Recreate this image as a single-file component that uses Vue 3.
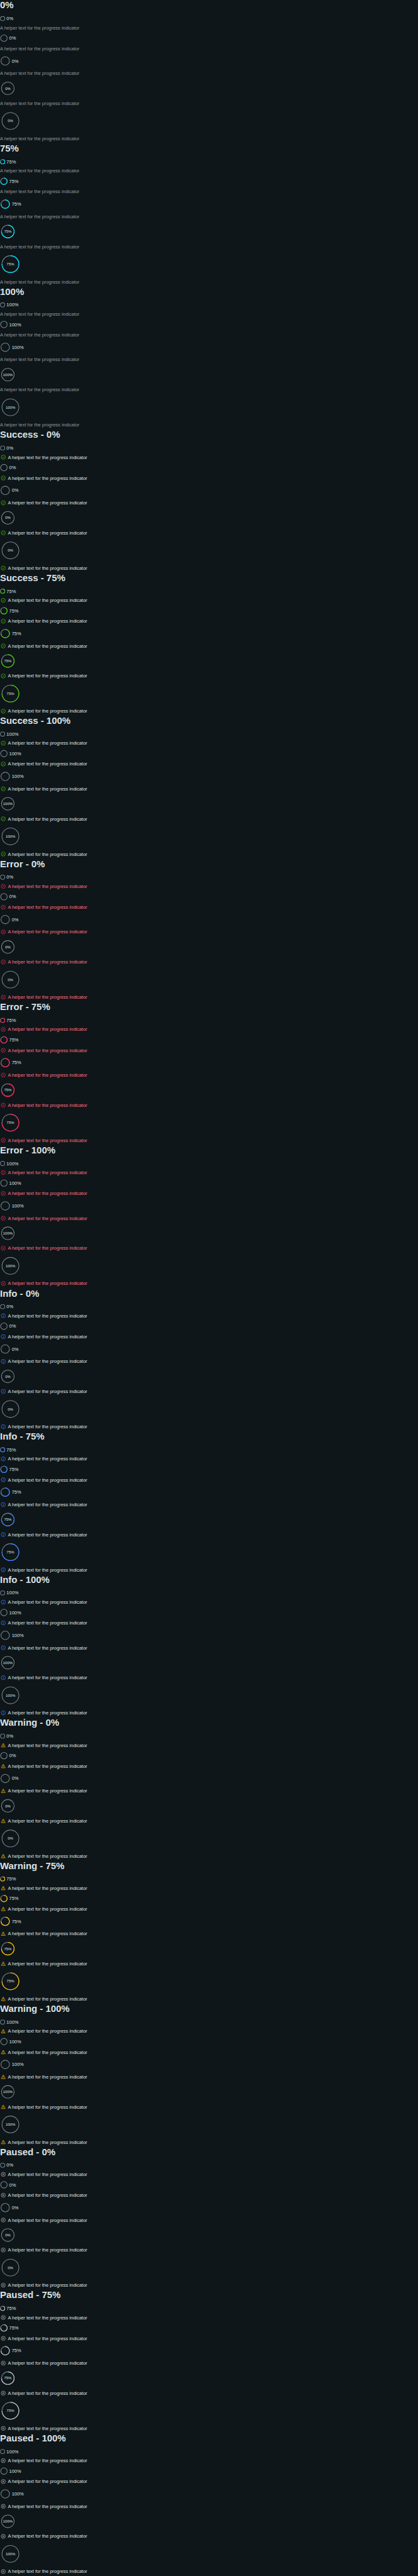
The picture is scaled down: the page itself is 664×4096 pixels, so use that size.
<script setup>
const helper = 'A helper text for the progress indicator'
const states = [
  { name: '', key: 'standard' },
  { name: 'Success', key: 'success' },
  { name: 'Error', key: 'error' },
  { name: 'Info', key: 'info' },
  { name: 'Warning', key: 'warning' },
  { name: 'Paused', key: 'paused' }
]
const values = [0, 75, 100]
const sections = states.flatMap((s) =>
  values.map((v) => ({
    key: s.key,
    value: v,
    title: s.name ? `${s.name} - ${v}%` : `${v}%`
  }))
)
const sizes = [
  { name: 'xs', box: 16, r: 6.6, w: 2 },
  { name: 'sm', box: 24, r: 9.95, w: 2.1 },
  { name: 'md', box: 32, r: 12.95, w: 2.1 },
  { name: 'lg', box: 48, r: 19.4, w: 2.1 },
  { name: 'xl', box: 64, r: 25.85, w: 2.1 }
]
// Three quarters of the ring, clockwise from the top
const arc = (s) => {
  const c = s.box / 2
  return `M${c} ${c - s.r}A${s.r} ${s.r} 0 1 1 ${c - s.r} ${c}`
}
</script>

<template>
  <div class="viewport">
    <main class="page">
      <section v-for="s in sections" :key="s.title" :class="['group', s.key]">
        <h2>{{ s.title }}</h2>
        <template v-for="z in sizes" :key="z.name">
          <div :class="['indicator', z.name]">
            <svg class="ring" :width="z.box" :height="z.box" :viewBox="`0 0 ${z.box} ${z.box}`">
              <circle class="track" :cx="z.box / 2" :cy="z.box / 2" :r="z.r" :stroke-width="z.w" />
              <path v-if="s.value === 75" class="bar" :d="arc(z)" :stroke-width="z.w + 0.2" />
              <path v-if="s.value === 0 && z.name === 'sm'" class="bar start" d="M12 2.05h0.8" stroke-width="1.6" />
            </svg>
            <span class="label">{{ s.value }}%</span>
          </div>
          <div class="helper">
            <svg v-if="s.key !== 'standard'" class="icon" width="16" height="16" viewBox="0 0 16 16">
              <template v-if="s.key === 'warning'">
                <path d="M8 2.2 14 13.3H2Z" />
                <path d="M8 5.8V9.6M8 10.7V12" />
              </template>
              <template v-else>
                <circle cx="8" cy="8" r="6.3" />
                <path v-if="s.key === 'success'" d="M5 8 7.1 10 10.7 6.1" />
                <path v-if="s.key === 'error'" d="M6 6 10 10M10 6 6 10" />
                <path v-if="s.key === 'info'" d="M8 4.5V5.9M8 7V11.5" />
                <path v-if="s.key === 'paused'" d="M6.7 5.2V10.8M9.3 5.2V10.8" />
              </template>
            </svg>
            <span>{{ helper }}</span>
          </div>
        </template>
      </section>
    </main>
  </div>
</template>

<style>
html,
body {
  margin: 0;
  background: #0f1619;
}
</style>

<style scoped>
.viewport {
  width: 664px;
  height: 4096px;
  overflow: hidden;
  background: #0f1619;
}
.page {
  width: 1280px;
  transform: scale(0.5185);
  transform-origin: 0 0;
  font: 14.4px/20px "Liberation Sans", Arial, sans-serif;
  color: #dbe2e5;
}
.group {
  height: 438.88px;
}
h2 {
  margin: 0;
  height: 39px;
  font-size: 28.8px;
  line-height: 33px;
  font-weight: 700;
}
.indicator {
  display: flex;
  align-items: center;
  gap: 4px;
}
.xs { height: 36px; }
.sm { height: 44px; }
.md { height: 56px; }
.lg { height: 72px; width: 48px; }
.xl { height: 88px; width: 64px; }
.lg,
.xl {
  display: grid;
  place-items: center;
}
.lg > *,
.xl > * {
  grid-area: 1 / 1;
}
.lg .label,
.xl .label {
  font-size: 11.52px;
}
.ring {
  display: block;
  flex: none;
  fill: none;
}
.track { stroke: #728389; }
.bar { stroke: var(--accent); }
.start { opacity: 0.6; }
.helper {
  display: flex;
  align-items: center;
  height: 20px;
  white-space: nowrap;
}
.icon {
  flex: none;
  margin: 0 6px 0 2px;
  fill: none;
  stroke: var(--accent);
  stroke-width: 1.4;
}
.standard { --accent: #00e5ff; }
.standard .helper { color: #91989b; }
.success { --accent: #46c800; }
.error { --accent: #ff2657; }
.error .helper { color: #ff6f87; }
.info { --accent: #3a80ff; }
.warning { --accent: #ffb900; }
.paused { --accent: #b9bbbd; }
</style>
